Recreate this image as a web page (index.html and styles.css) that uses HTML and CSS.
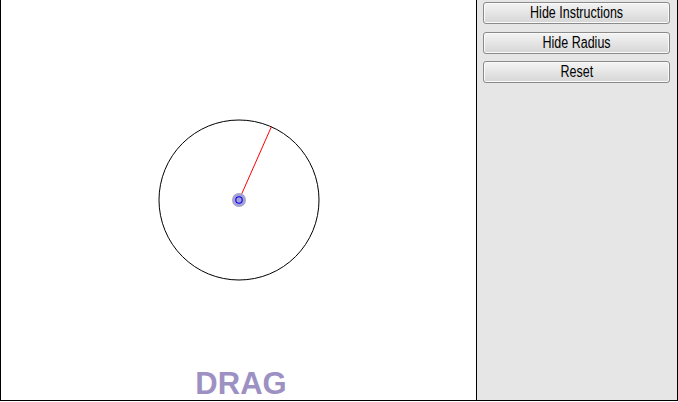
FILE: index.html
```html
<!DOCTYPE html>
<html lang="en">
<head>
    <meta charset="UTF-8">
    <title>Circle Radius</title>
    <link rel="stylesheet" href="styles.css">
</head>
<body>
    <div class="app">
        <div class="stage">
            <svg class="canvas" width="475" height="400" viewBox="0 0 475 400">
                <circle cx="238" cy="200" r="80" fill="none" stroke="#000" stroke-width="1"/>
                <line x1="238" y1="200" x2="270.5" y2="126.5" stroke="#ff0000" stroke-width="1"/>
                <circle cx="238" cy="200" r="7" fill="#a7a1cf"/>
                <circle cx="238" cy="200" r="3.2" fill="none" stroke="#0000ff" stroke-width="1.1"/>
                <text class="drag-label" x="240" y="394" text-anchor="middle">DRAG</text>
            </svg>
        </div>
        <div class="sidebar">
            <button type="button" class="side-button"><span>Hide Instructions</span></button>
            <button type="button" class="side-button"><span>Hide Radius</span></button>
            <button type="button" class="side-button"><span>Reset</span></button>
        </div>
    </div>
</body>
</html>
```

FILE: styles.css
```css
body {
    margin: 0;
    background: white;
    font-family: 'Liberation Sans', Arial, sans-serif;
}

.app {
    display: flex;
    width: 676px;
    height: 400px;
    border: 1px solid black;
    border-top: none;
}

.stage {
    width: 475px;
    background: white;
}

.canvas {
    display: block;
}

.drag-label {
    font-family: 'Liberation Sans', Arial, sans-serif;
    font-size: 31px;
    font-weight: bold;
    fill: #9d91c3;
}

.sidebar {
    flex: 1;
    border-left: 1px solid black;
    background: #e6e6e6;
    display: flex;
    flex-direction: column;
    gap: 7.5px;
    padding: 2px 7px 0 6px;
}

.side-button {
    height: 22px;
    border: 1px solid #8a8a8a;
    border-radius: 3px;
    background: linear-gradient(#f4f4f4, #e2e2e2 60%, #d6d6d6);
    box-shadow: inset 0 0 0 1px #fafafa;
    font-family: 'Liberation Sans', Arial, sans-serif;
    font-size: 16px;
    line-height: 18px;
    color: black;
    padding: 0;
    cursor: pointer;
}

.side-button span {
    display: inline-block;
    transform: scaleX(0.78);
}
```
